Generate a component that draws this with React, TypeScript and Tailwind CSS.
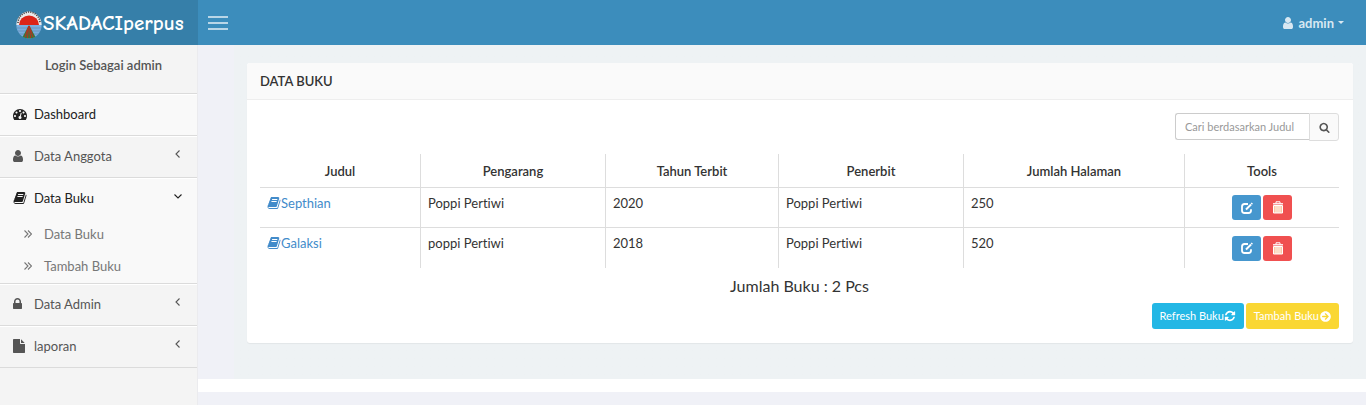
import type { ReactNode } from "react";
import { FaArrowCircleRight } from "react-icons/fa";

const paths = {
  user: "M1536 1399q0 109-62.5 187t-150.5 78h-854q-88 0-150.5-78t-62.5-187q0-85 8.5-160.5t31.5-152 58.5-131 94-89 134.5-34.5q131 128 313 128t313-128q76 0 134.5 34.5t94 89 58.5 131 31.5 152 8.5 160.5zm-256-887q0 159-112.5 271.5t-271.5 112.5-271.5-112.5-112.5-271.5 112.5-271.5 271.5-112.5 271.5 112.5 112.5 271.5z",
  book: "M1703 478q40 57 18 129l-275 906q-19 64-76.5 107.5t-122.5 43.5h-923q-77 0-148.5-53.5t-99.5-131.5q-24-67-2-127 0-4 3-27t4-37q1-8-3-21.5t-3-19.5q2-11 8-21t16.5-23.5 16.5-23.5q23-38 45-91.5t30-91.5q3-10 .5-30t-.5-28q3-11 17-28t17-23q21-36 42-92t25-90q1-9-2.5-32t.5-28q4-13 22-30.5t22-22.5q19-26 42.5-84.5t27.5-96.5q1-8-3-25.5t-2-26.5q2-8 9-18t18-23 17-21q8-12 16.5-30.5t15-35 16-36 19.5-32 26.5-23.5 36-11.5 47.5 5.5l-1 3q38-9 51-9h761q74 0 114 56t18 130l-274 906q-36 119-71.5 153.5t-128.5 34.5h-869q-27 0-38 15-11 16-1 43 24 70 144 70h923q29 0 56-15.5t35-41.5l300-987q7-22 5-57 38 15 59 43zm-1064 2q-4 13 2 22.5t20 9.5h608q13 0 25.5-9.5t16.5-22.5l21-64q4-13-2-22.5t-20-9.5h-608q-13 0-25.5 9.5t-16.5 22.5zm-83 256q-4 13 2 22.5t20 9.5h608q13 0 25.5-9.5t16.5-22.5l21-64q4-13-2-22.5t-20-9.5h-608q-13 0-25.5 9.5t-16.5 22.5z",
  lock: "M640 768h512v-192q0-106-75-181t-181-75-181 75-75 181v192zm832 96v576q0 40-28 68t-68 28h-960q-40 0-68-28t-28-68v-576q0-40 28-68t68-28h32v-192q0-184 132-316t316-132 316 132 132 316v192h32q40 0 68 28t28 68z",
  file: "M1152 512v-472q22 14 36 28l408 408q14 14 28 36h-472zm-128 32q0 40 28 68t68 28h544v1056q0 40-28 68t-68 28h-1344q-40 0-68-28t-28-68v-1600q0-40 28-68t68-28h800v544z",
  gauge: "M384 1152q0-53-37.5-90.5t-90.5-37.5-90.5 37.5-37.5 90.5 37.5 90.5 90.5 37.5 90.5-37.5 37.5-90.5zm192-448q0-53-37.5-90.5t-90.5-37.5-90.5 37.5-37.5 90.5 37.5 90.5 90.5 37.5 90.5-37.5 37.5-90.5zm428 481l101-382q6-26-7.5-48.5t-38.5-29.5-48 6.5-30 39.5l-101 382q-60 5-107 43.5t-63 98.5q-20 77 20 146t117 89 146-20 89-117q16-60-6-117t-72-91zm660-33q0-53-37.5-90.5t-90.5-37.5-90.5 37.5-37.5 90.5 37.5 90.5 90.5 37.5 90.5-37.5 37.5-90.5zm-640-640q0-53-37.5-90.5t-90.5-37.5-90.5 37.5-37.5 90.5 37.5 90.5 90.5 37.5 90.5-37.5 37.5-90.5zm448 192q0-53-37.5-90.5t-90.5-37.5-90.5 37.5-37.5 90.5 37.5 90.5 90.5 37.5 90.5-37.5 37.5-90.5zm320 448q0 261-141 483-19 29-54 29h-1402q-35 0-54-29-141-221-141-483 0-182 71-348t191-286 286-191 348-71 348 71 286 191 191 286 71 348z",
  search: "M1216 832q0-185-131.5-316.5t-316.5-131.5-316.5 131.5-131.5 316.5 131.5 316.5 316.5 131.5 316.5-131.5 131.5-316.5zm512 832q0 52-38 90t-90 38q-54 0-90-38l-343-342q-179 124-399 124-143 0-273.5-55.5t-225-150-150-225-55.5-273.5 55.5-273.5 150-225 225-150 273.5-55.5 273.5 55.5 225 150 150 225 55.5 273.5q0 220-124 399l343 343q37 37 37 90z",
  refresh: "M1639 1056q0 5-1 7-64 268-268 434.5t-478 166.5q-146 0-282.5-55t-243.5-157l-129 129q-19 19-45 19t-45-19-19-45v-448q0-26 19-45t45-19h448q26 0 45 19t19 45-19 45l-137 137q71 66 161 102t187 36q134 0 250-65t186-179q11-17 53-117 8-23 30-23h192q13 0 22.5 9.5t9.5 22.5zm25-800v448q0 26-19 45t-45 19h-448q-26 0-45-19t-19-45 19-45l138-138q-148-137-349-137-134 0-250 65t-186 179q-11 17-53 117-8 23-30 23h-199q-13 0-22.5-9.5t-9.5-22.5v-7q65-268 270-434.5t480-166.5q146 0 284 55.5t245 156.5l130-129q19-19 45-19t45 19 19 45z",
};

type IconName = keyof typeof paths;

function Icon({ name, className, box = "0 0 1792 1792" }: { name: IconName; className: string; box?: string }) {
  return (
    <svg viewBox={box} preserveAspectRatio="xMinYMid meet" className={className} fill="currentColor" aria-hidden="true">
      <path d={paths[name]} />
    </svg>
  );
}

function Logo() {
  return (
    <svg viewBox="0 0 26 28" className="h-7 w-[26px] shrink-0" aria-hidden="true">
      <ellipse cx="13" cy="14" rx="12.6" ry="13.4" fill="#79aee0" />
      <path d="M.4 14a12.6 13.4 0 0 1 25.2 0z" fill="#e9e9e9" />
      <path d="M2 12a11 11 0 0 1 22 0" fill="none" stroke="#444" strokeWidth="1.6" strokeDasharray="1.2 1.1" />
      <path d="M3 14a10 9.500 0 0 1 20 0z" fill="#dc2418" />
      <path d="M1 17h24M2 20h22M3.500 23h19" stroke="#6689ad" strokeWidth=".7" />
      <path d="M13 14 6.500 26Q13 29 19.500 26z" fill="#38793b" />
      <path d="m12.500 15-1 12M13.500 15l1 12M12 17l-3 9M14 17l3 9" stroke="#b53022" strokeWidth="1.100" />
    </svg>
  );
}

function Chevron({ down = false }: { down?: boolean }) {
  return (
    <svg viewBox="0 0 8 8" className="mb-1 h-2 w-2" fill="none" stroke="currentColor" strokeWidth="1.100" aria-hidden="true">
      <path d={down ? "M.500 2.500 4 6l3.500-3.500" : "M5.500.500 2 4l3.500 3.500"} />
    </svg>
  );
}

function MenuItem({ icon, label, active = false, arrow, box, children }: {
  icon: IconName; label: string; active?: boolean; arrow?: "left" | "down"; box?: string; children?: ReactNode;
}) {
  return (
    <li className={active ? "border-t border-b border-t-white border-b-[#dbdbdb] bg-[#f9f9f9] text-[#222]" : "border-t border-b border-t-white border-b-[#dbdbdb] text-[#555]"}>
      <a href="#" className="flex h-10 items-center pr-[15px] pb-[2px] pl-[13px]">
        <span className="flex w-[21px]">
          <Icon name={icon} box={box} className="h-[14px] w-[14px]" />
        </span>
        <span className="flex-1">{label}</span>
        {arrow && <Chevron down={arrow === "down"} />}
      </a>
      {children}
    </li>
  );
}

function SubItem({ label }: { label: string }) {
  return (
    <li>
      <a href="#" className="flex h-8 items-center pb-[2px] pl-6 text-[#777]">
        <svg viewBox="0 0 8 8" className="mr-3 h-2 w-2" fill="none" stroke="currentColor" strokeWidth="1.100" aria-hidden="true">
          <path d="M.500.500 4 4 .500 7.500M4 .500 7.500 4 4 7.500" />
        </svg>
        {label}
      </a>
    </li>
  );
}

function EditIcon() {
  return (
    <svg viewBox="0 0 12 12" className="h-3 w-3" fill="none" stroke="currentColor" aria-hidden="true">
      <path d="M7 2H3.500Q1 2 1 4.500v4Q1 11 3.500 11h4Q10 11 10 8.500V7.200" strokeWidth="1.800" />
      <path d="m5 7.500 5-5" strokeWidth="2" />
      <path d="m10.300 2.200 1-1" strokeWidth="1.800" />
    </svg>
  );
}

function TrashIcon() {
  return (
    <svg viewBox="0 0 12 13" className="h-[13px] w-3" fill="none" stroke="currentColor" aria-hidden="true">
      <path d="M4 2.500V.800h4v1.700" />
      <path d="M1 2.800h10" strokeWidth="1.300" />
      <path d="M1.500 4.500h9V12h-9z" fill="#fbc9a6" />
      <path d="M4 5v7M6 5v7M8 5v7" strokeWidth=".8" />
    </svg>
  );
}

const books = [
  ["Septhian", "Poppi Pertiwi", "2020", "Poppi Pertiwi", "250"],
  ["Galaksi", "poppi Pertiwi", "2018", "Poppi Pertiwi", "520"],
];

const columns = [
  { label: "Judul", width: "w-[161px]" },
  { label: "Pengarang", width: "w-[185px]" },
  { label: "Tahun Terbit", width: "w-[173px]" },
  { label: "Penerbit", width: "w-[185px]" },
  { label: "Jumlah Halaman", width: "w-[221px]" },
  { label: "Tools", width: "w-[154px]" },
];

export default function App() {
  return (
    <div className="flex min-h-screen flex-col bg-[#f0f1f7] font-['Lato',sans-serif] text-[13px] leading-5 text-[#333] [font-variant-ligatures:none]">
      <header className="flex h-[45px] bg-[#3c8dbc] text-white">
        <a href="#" className="flex w-[198px] shrink-0 items-center bg-[#367fa9] pt-1 pl-4">
          <Logo />
          <span className="pb-1 pl-px font-['Comic_Sans_MS','Comic_Neue','Open_Sans',sans-serif] text-[21px] font-semibold">SKADACIperpus</span>
        </a>
        <button type="button" aria-label="Toggle navigation" className="px-[10px]">
          <svg viewBox="0 0 20 14" className="h-[14px] w-5" stroke="#e2eef5" strokeWidth="1.500" aria-hidden="true">
            <path d="M0 1h20M0 7h20M0 13h20" />
          </svg>
        </button>
        <button type="button" className="ml-auto flex items-center pr-[22px] font-bold text-[#d8e8f2]">
          <Icon name="user" box="256 0 1536 1792" className="mr-[3px] h-[14px] w-[13px]" />
          admin
          <span className="ml-1 border-x-[3px] border-t-[3px] border-x-transparent" />
        </button>
      </header>

      <div className="flex flex-1">
        <aside className="w-[198px] shrink-0 border-r border-[#ebebee] bg-[#f4f4f4]">
          <p className="h-[49px] border-b border-[#dbdbdb] pt-[10px] pl-[10px] text-center font-semibold text-[#555]">Login Sebagai admin</p>
          <nav aria-label="Menu">
            <ul>
              <MenuItem icon="gauge" label="Dashboard" active />
              <MenuItem icon="user" label="Data Anggota" arrow="left" box="256 0 1536 1792" />
              <MenuItem icon="book" label="Data Buku" arrow="down" active>
                <ul>
                  <SubItem label="Data Buku" />
                  <SubItem label="Tambah Buku" />
                </ul>
              </MenuItem>
              <MenuItem icon="lock" label="Data Admin" arrow="left" box="320 0 1536 1792" />
              <MenuItem icon="file" label="laporan" arrow="left" box="128 0 1536 1792" />
            </ul>
          </nav>
        </aside>

        <div className="flex min-w-0 flex-1 flex-col">
          <main className="bg-linear-to-r from-[#f0f1f7] from-[36px] to-[#eef2f4] to-[36px] pt-[18px] pr-[13px] pb-9 pl-[49px]">
            <section className="rounded-[3px] bg-white shadow-[0_1px_1px_rgba(0,0,0,0.05)]">
              <h1 className="rounded-t-[3px] border-b border-[#eee] bg-[#fafafa] px-[13px] py-2 font-semibold">DATA BUKU</h1>
              <div className="pt-[13px] pr-[14px] pb-[14px] pl-[13px]">
                <form className="flex justify-end" onSubmit={(e) => e.preventDefault()}>
                  <input aria-label="Cari berdasarkan Judul" placeholder="Cari berdasarkan Judul" className="h-[27px] w-[134px] rounded-l-[3px] border border-r-0 border-[#ccc] bg-white px-[9px] text-[11px] placeholder:text-[#999]" />
                  <button type="submit" aria-label="Cari" className="flex h-7 w-[30px] items-center justify-center rounded-r-[3px] border border-[#ddd] bg-[#fafafa] text-[#555]">
                    <Icon name="search" className="h-[11px] w-[11px]" />
                  </button>
                </form>
                <table className="mt-[13px] w-full table-fixed border-separate border-spacing-0">
                  <thead>
                    <tr>
                      {columns.map((c) => (
                        <th key={c.label} scope="col" className={`${c.width} h-[34px] border-r border-b border-[#ddd] font-semibold last:border-r-0`}>{c.label}</th>
                      ))}
                    </tr>
                  </thead>
                  <tbody>
                    {books.map((row) => (
                      <tr key={row[0]} className="group h-10">
                        {row.map((cell, i) => (
                          <td key={i} className="border-r border-b border-[#ddd] px-[7px] pt-[5px] align-top group-last:border-b-0">
                            {i === 0 ? (
                              <a href="#" className="flex items-center text-[#428bca]">
                                <Icon name="book" className="h-[14px] w-[14px]" />
                                {cell}
                              </a>
                            ) : cell}
                          </td>
                        ))}
                        <td className="border-b border-[#ddd] align-middle group-last:border-b-0">
                          <div className="flex justify-center gap-[2px] text-white">
                            <button type="button" aria-label={`Edit ${row[0]}`} className="flex h-[25px] w-[29px] items-center justify-center rounded-[3px] bg-[#4697ce]"><EditIcon /></button>
                            <button type="button" aria-label={`Hapus ${row[0]}`} className="flex h-[25px] w-[29px] items-center justify-center rounded-[3px] bg-[#f05050]"><TrashIcon /></button>
                          </div>
                        </td>
                      </tr>
                    ))}
                  </tbody>
                </table>
                <p className="pt-2 text-center text-base leading-5">Jumlah Buku : 2 Pcs</p>
                <div className="mt-[7px] flex justify-end gap-[2px] text-[11px] text-white">
                  <button type="button" className="flex h-[26px] items-center rounded-[3px] bg-[#23b7e5] px-2">
                    Refresh Buku
                    <Icon name="refresh" className="h-3 w-3" />
                  </button>
                  <button type="button" className="flex h-[26px] items-center gap-px rounded-[3px] bg-[#fad733] px-2">
                    Tambah Buku
                    <FaArrowCircleRight className="h-[11px] w-[11px]" aria-hidden="true" />
                  </button>
                </div>
              </div>
            </section>
          </main>
          <footer className="h-[13px] bg-white" />
        </div>
      </div>
    </div>
  );
}
